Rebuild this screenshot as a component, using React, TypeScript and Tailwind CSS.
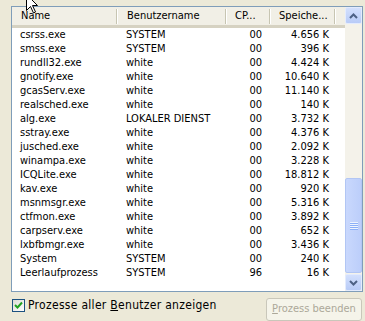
import React from "react";

type Row = [string, string, string, string];

const rows: Row[] = [
  ["csrss.exe", "SYSTEM", "00", "4.656 K"],
  ["smss.exe", "SYSTEM", "00", "396 K"],
  ["rundll32.exe", "white", "00", "4.424 K"],
  ["gnotify.exe", "white", "00", "10.640 K"],
  ["gcasServ.exe", "white", "00", "11.140 K"],
  ["realsched.exe", "white", "00", "140 K"],
  ["alg.exe", "LOKALER DIENST", "00", "3.732 K"],
  ["sstray.exe", "white", "00", "4.376 K"],
  ["jusched.exe", "white", "00", "2.092 K"],
  ["winampa.exe", "white", "00", "3.228 K"],
  ["ICQLite.exe", "white", "00", "18.812 K"],
  ["kav.exe", "white", "00", "920 K"],
  ["msnmsgr.exe", "white", "00", "5.316 K"],
  ["ctfmon.exe", "white", "00", "3.892 K"],
  ["carpserv.exe", "white", "00", "652 K"],
  ["lxbfbmgr.exe", "white", "00", "3.436 K"],
  ["System", "SYSTEM", "00", "240 K"],
  ["Leerlaufprozess", "SYSTEM", "96", "16 K"],
];

function Sep() {
  return <div className="w-[2px] h-[15px] border-l border-l-[#C7C5B2] border-r border-r-white shrink-0" />;
}

function Chevron({ up }: { up: boolean }) {
  return (
    <svg width="9" height="6" viewBox="0 0 9 6">
      <polyline
        points={up ? "1,5 4.5,1.5 8,5" : "1,1 4.5,4.5 8,1"}
        fill="none"
        stroke="#4D6185"
        strokeWidth="2"
      />
    </svg>
  );
}

function ScrollButton({ up }: { up: boolean }) {
  return (
    <div className="w-[17px] h-[17px] rounded-[2px] border border-[#E3EBFD] bg-gradient-to-b from-[#D3E0FD] to-[#B8CBF7] flex items-center justify-center shrink-0">
      <Chevron up={up} />
    </div>
  );
}

export default function App() {
  return (
    <div
      className="relative w-[365px] h-[321px] bg-[#ECE9D8] overflow-hidden text-[11px] text-black"
      style={{ fontFamily: '"DejaVu Sans Condensed", "Liberation Sans", sans-serif' }}
    >
      <div className="pt-[6px] pl-[11px]">
        <div className="w-[352px] h-[286px] border border-[#7F9DB9] bg-white flex">
          <div className="flex-1 flex flex-col min-w-0">
            {/* header */}
            <div className="h-[21px] flex items-center bg-[#F1EFE6] border-b-[3px] border-b-[#D6D2C2] shrink-0 leading-[14px]">
              <div className="w-[106px] flex items-center justify-between">
                <span className="pl-[9px]">Name</span>
                <Sep />
              </div>
              <div className="w-[109px] flex items-center justify-between">
                <span className="pl-[9px]">Benutzername</span>
                <Sep />
              </div>
              <div className="w-[44px] flex items-center justify-between">
                <span className="pl-[8px]">CP...</span>
                <Sep />
              </div>
              <div className="w-[65px] flex items-center justify-between">
                <span className="pl-[8px]">Speiche...</span>
                <Sep />
              </div>
            </div>
            {/* rows */}
            <div className="flex flex-col">
              {rows.map((r) => (
                <div key={r[0]} className="h-[14px] flex items-center leading-[14px] whitespace-nowrap">
                  <div className="w-[106px] pl-[8px]">{r[0]}</div>
                  <div className="w-[109px] pl-[8px]">{r[1]}</div>
                  <div className="w-[44px] pr-[9px] text-right">{r[2]}</div>
                  <div className="w-[65px] pr-[7px] text-right">{r[3]}</div>
                </div>
              ))}
            </div>
          </div>
          {/* scrollbar */}
          <div className="w-[17px] flex flex-col bg-[#F4F2EA]">
            <ScrollButton up={true} />
            <div className="flex-1 flex flex-col justify-end pb-[1px]">
              <div className="h-[95px] rounded-[2px] border border-[#B2C6F4] bg-gradient-to-r from-[#C9D8FD] to-[#BCCEFA] flex items-center justify-center">
                <div className="flex flex-col w-[8px]">
                  <div className="h-[1px] bg-[#EEF4FE]" />
                  <div className="h-[1px] bg-[#8CB0F8]" />
                  <div className="h-[1px] bg-[#EEF4FE]" />
                  <div className="h-[1px] bg-[#8CB0F8]" />
                  <div className="h-[1px] bg-[#EEF4FE]" />
                  <div className="h-[1px] bg-[#8CB0F8]" />
                  <div className="h-[1px] bg-[#EEF4FE]" />
                  <div className="h-[1px] bg-[#8CB0F8]" />
                </div>
              </div>
            </div>
            <ScrollButton up={false} />
          </div>
        </div>
      </div>

      {/* bottom row */}
      <div className="flex items-start justify-between pl-[12px] pr-[3px]">
        <div className="mt-[7px] flex items-center gap-[3px]">
          <div className="w-[13px] h-[13px] border border-[#1C5180] bg-gradient-to-br from-[#DCDBD5] to-white flex items-center justify-center">
            <svg width="9" height="9" viewBox="0 0 9 9">
              <polyline points="1,4 3.5,6.5 8,1.5" fill="none" stroke="#21A121" strokeWidth="2" />
            </svg>
          </div>
          <span className="leading-[13px] text-[12px] tracking-[0.3px]">
            Prozesse aller <u>B</u>enutzer anzeigen
          </span>
        </div>
        <div className="mt-[6px] w-[96px] h-[23px] rounded-[3px] border border-[#C9C7BA] bg-[#F5F4EA] text-[#ACA899] flex items-center justify-center">
          <span>
            <u>P</u>rozess beenden
          </span>
        </div>
      </div>

      {/* mouse cursor */}
      <svg className="absolute left-[26px] top-[-6px]" width="13" height="20" viewBox="0 0 13 20">
        <path d="M0.5,0.5 L0.5,16.5 L4.5,12.5 L7.5,19 L9.5,18 L6.5,11.5 L11.5,11.5 Z" fill="white" stroke="black" strokeWidth="1" />
      </svg>
    </div>
  );
}
